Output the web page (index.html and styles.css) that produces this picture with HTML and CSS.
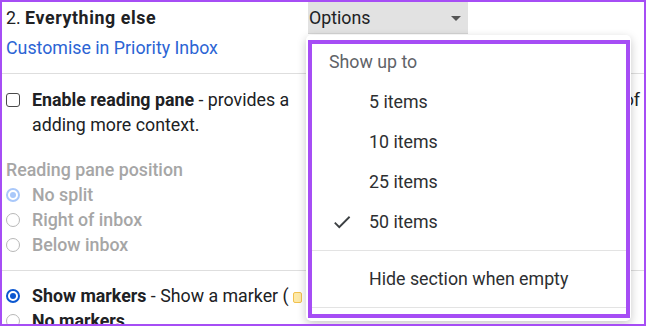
FILE: index.html
```html
<!DOCTYPE html>
<html>
<head>
<meta charset="utf-8">
<link rel="stylesheet" href="styles.css">
</head>
<body>
<div class="frame">
  <div class="content">
    <div class="head">
      <div class="title">2. <b>Everything else</b></div>
      <div class="options"><span>Options</span><span class="caret"></span></div>
    </div>
    <div class="link">Customise in Priority Inbox</div>
    <div class="sep"></div>
    <div class="row pane">
      <span class="checkbox"></span>
      <div class="desc">
        <div class="l1"><span><b>Enable reading pane</b> - provides a</span><span>of</span></div>
        <div>adding more context.</div>
      </div>
    </div>
    <div class="muted heading">Reading pane position</div>
    <div class="row muted"><span class="radio on-dis"></span>No split</div>
    <div class="row muted"><span class="radio"></span>Right of inbox</div>
    <div class="row muted"><span class="radio"></span>Below inbox</div>
    <div class="sep sep2"></div>
    <div class="row markers"><span class="radio on"></span><span><b>Show markers</b> - Show a marker ( <span class="marker"></span></span></div>
    <div class="row"><span class="radio"></span><b>No markers</b></div>
  </div>

  <div class="menu">
    <div class="menu-inner">
      <div class="menu-head">Show up to</div>
      <div class="item">5 items</div>
      <div class="item">10 items</div>
      <div class="item">25 items</div>
      <div class="item checked">
        <svg class="check" viewBox="0 0 24 24" width="22" height="22"><path d="M9 16.17L4.83 12l-1.420 1.41L9 19 21 7l-1.41-1.41z" fill="#3c4043"/></svg>
        50 items
      </div>
      <div class="msep"></div>
      <div class="item">Hide section when empty</div>
      <div class="msep"></div>
    </div>
  </div>
</div>
</body>
</html>
```
FILE: styles.css
```css
* { box-sizing: border-box; }
html, body { margin: 0; padding: 0; background: #fff; }
body {
  font-family: Roboto, "Liberation Sans", sans-serif;
  font-size: 17.8px;
  color: #202124;
}
.frame {
  position: relative;
  width: 646px;
  height: 326px;
  border: 2px solid #a64df5;
  overflow: hidden;
  background: #fff;
}
.content { padding-left: 4px; }
.head { display: flex; height: 32px; }
.title { width: 302px; line-height: 32px; }
.title b { font-weight: 700; letter-spacing: 0.6px; }
.options {
  width: 160px;
  background: #e2e2e2;
  border-bottom: 1px solid #d4d4d4;
  display: flex;
  align-items: center;
  justify-content: space-between;
  padding: 0 7px 0 1px;
  color: #202124;
}
.caret {
  width: 0; height: 0;
  border-left: 5px solid transparent;
  border-right: 5px solid transparent;
  border-top: 5px solid #555;
  margin-top: 2px;
}
.link { color: #2b64d4; line-height: 28px; margin-bottom: 11px; }
.sep { height: 1px; background: #dedede; margin-left: -4px; margin-right: -2px; }
.row { display: flex; align-items: center; line-height: 25px; white-space: nowrap; }
.pane { align-items: flex-start; margin-top: 13px; }
.checkbox {
  width: 14px; height: 14px;
  border: 1.6px solid #4a4a4a;
  border-radius: 3px;
  margin-top: 6px;
  margin-right: 12px;
  flex: none;
}
.desc { width: 608px; }
.l1 { display: flex; justify-content: space-between; }
.muted { color: #a6a6a6; font-weight: 500; }
.heading { margin-top: 20px; line-height: 25px; }
.radio {
  width: 14px; height: 14px;
  border: 1.3px solid #b8b8b8;
  border-radius: 50%;
  margin-right: 12px;
  flex: none;
  position: relative;
}
.radio.on-dis { border: 2px solid #a9c8fa; }
.radio.on-dis::after, .radio.on::after {
  content: "";
  position: absolute;
  left: 2px; top: 2px; right: 2px; bottom: 2px;
  border-radius: 50%;
  background: #a9c8fa;
}
.radio.on { border: 2px solid #0b57d0; }
.radio.on::after { background: #0b57d0; }
.sep2 { margin-top: 13px; }
.markers { margin-top: 12px; }
.row b { font-weight: 700; color: #202124; }
.marker {
  display: inline-block;
  width: 9px; height: 11px;
  border: 1.5px solid #f2c14e;
  background: #fde9a8;
  border-radius: 2px;
  vertical-align: -1px;
}
.menu {
  position: absolute;
  left: 304px;
  top: 33px;
  width: 325px;
  background: #fff;
  border-radius: 5px;
  box-shadow: 0 3px 10px rgba(0,0,0,0.22);
  padding: 5px 1px 3px 2px;
}
.menu-inner {
  border: 4px solid #a64df5;
  height: 278px;
  padding-top: 6px;
}
.menu-head { color: #5f6368; line-height: 24px; padding-left: 17px; margin-bottom: 8px; }
.item {
  position: relative;
  line-height: 40px;
  padding-left: 57px;
  color: #2d2f31;
}
.check { position: absolute; left: 19px; top: 9px; }
.msep { height: 1px; background: #e3e3e3; margin: 8px 0 8px; }
```
